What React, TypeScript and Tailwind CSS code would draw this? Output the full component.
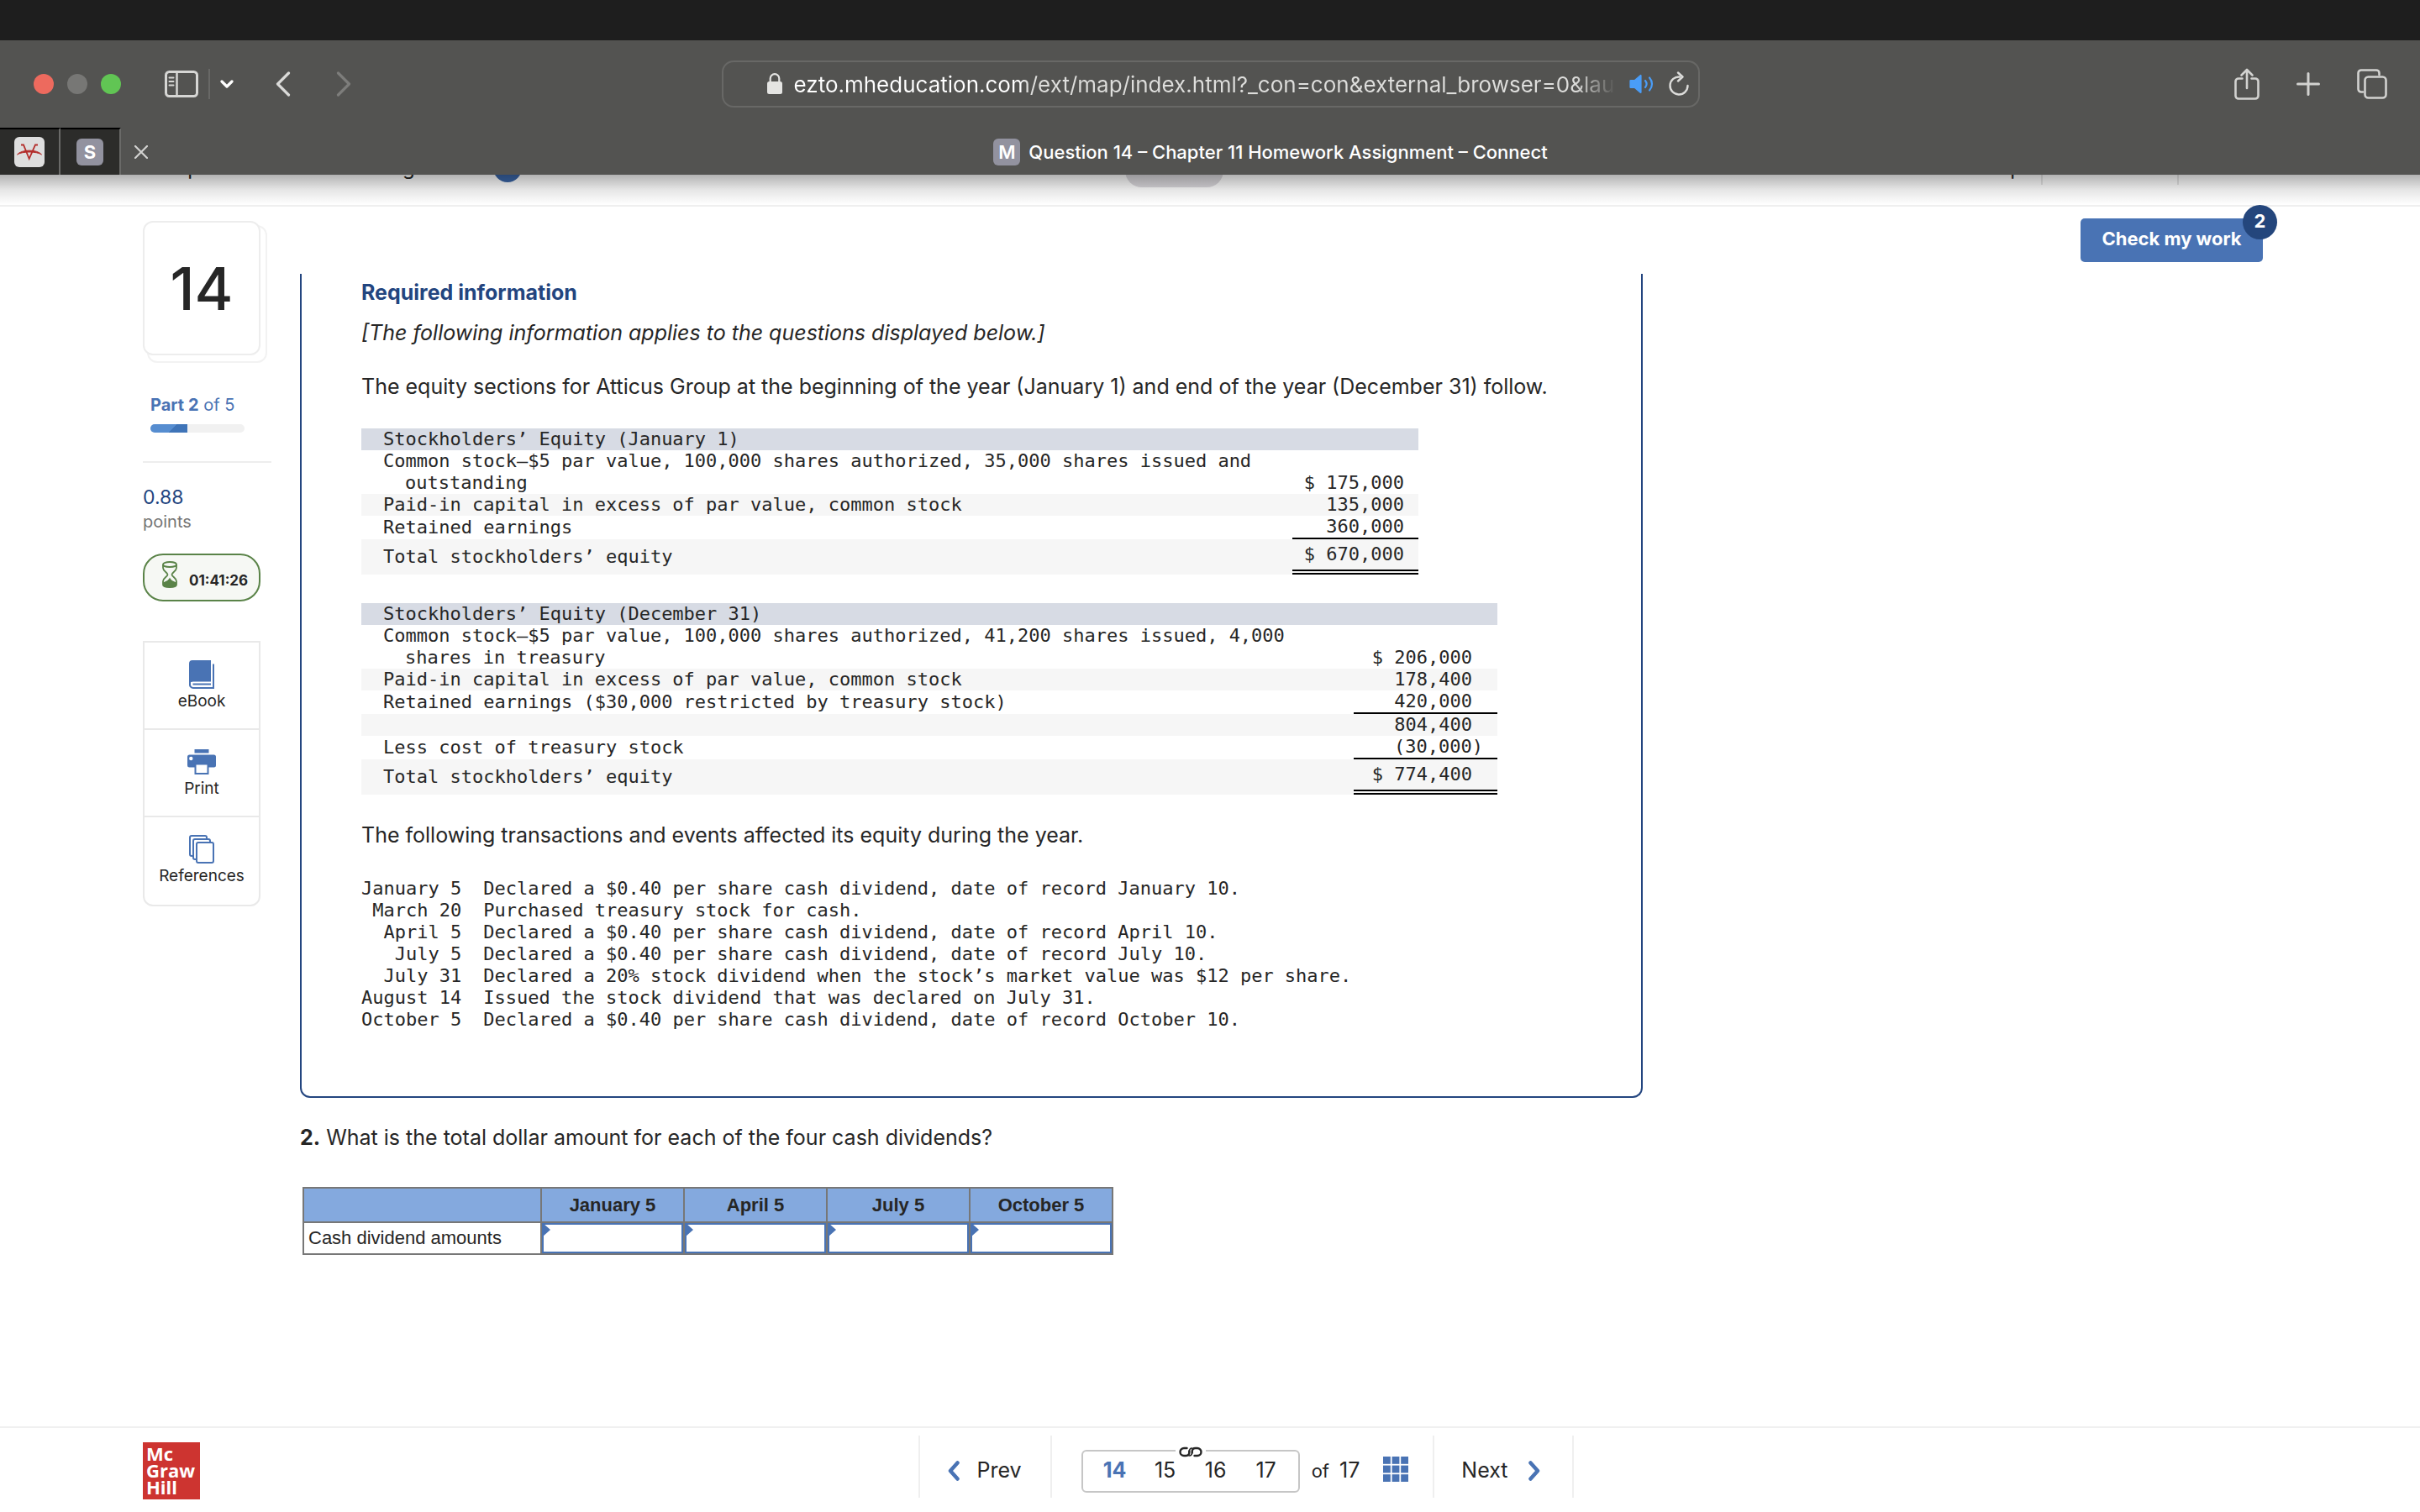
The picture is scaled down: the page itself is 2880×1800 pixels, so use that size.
import React, { useState } from 'react';
import { clsx } from 'clsx';

// --- Types & data ---
interface EquityRow {
    label: string;
    amount: string;
    rule?: boolean;
    total?: boolean;
}

const januaryRows: EquityRow[] = [
    { label: 'Common stock–$5 par value, 100,000 shares authorized, 35,000 shares issued and outstanding', amount: '$ 175,000' },
    { label: 'Paid-in capital in excess of par value, common stock', amount: '135,000' },
    { label: 'Retained earnings', amount: '360,000', rule: true },
    { label: 'Total stockholders’ equity', amount: '$ 670,000', total: true },
];

const decemberRows: EquityRow[] = [
    { label: 'Common stock–$5 par value, 100,000 shares authorized, 41,200 shares issued, 4,000 shares in treasury', amount: '$ 206,000' },
    { label: 'Paid-in capital in excess of par value, common stock', amount: '178,400' },
    { label: 'Retained earnings ($30,000 restricted by treasury stock)', amount: '420,000', rule: true },
    { label: '', amount: '804,400' },
    { label: 'Less cost of treasury stock', amount: '(30,000)', rule: true },
    { label: 'Total stockholders’ equity', amount: '$ 774,400', total: true },
];

const transactions = [
    ['January 5', 'Declared a $0.40 per share cash dividend, date of record January 10.'],
    ['March 20', 'Purchased treasury stock for cash.'],
    ['April 5', 'Declared a $0.40 per share cash dividend, date of record April 10.'],
    ['July 5', 'Declared a $0.40 per share cash dividend, date of record July 10.'],
    ['July 31', 'Declared a 20% stock dividend when the stock’s market value was $12 per share.'],
    ['August 14', 'Issued the stock dividend that was declared on July 31.'],
    ['October 5', 'Declared a $0.40 per share cash dividend, date of record October 10.'],
];

const dividendDates = ['January 5', 'April 5', 'July 5', 'October 5'];

// --- Icons ---
const SidebarIcon = () => (
    <svg width="40" height="32" viewBox="0 0 40 32" fill="none" stroke="#d6d6d4" strokeWidth="3">
        <rect x="1.5" y="1.5" width="37" height="29" rx="4" />
        <path d="M14.5 2v28" strokeWidth="2.5" />
        <path d="M5.5 8.5h5M5.5 13h5M5.5 17.5h5" strokeWidth="2" strokeLinecap="round" />
    </svg>
);

const LockIcon = () => (
    <svg width="18" height="26" viewBox="0 0 18 26">
        <rect x="0" y="10" width="18" height="15" rx="2.5" fill="#e4e4e2" />
        <path d="M3.7 11V6.5a5.3 5.3 0 0 1 10.6 0V11" fill="none" stroke="#e4e4e2" strokeWidth="2.2" />
    </svg>
);

const SpeakerIcon = () => (
    <svg width="30" height="24" viewBox="0 0 30 24" fill="none" stroke="#4a9df8" strokeWidth="2.2" strokeLinecap="round">
        <path d="M1.5 8h5l7-6v20l-7-6h-5z" fill="#4a9df8" strokeLinejoin="round" />
        <path d="M19 8c2 2.5 2 5.5 0 8M24 4.5c4 4.5 4 10.5 0 15" />
    </svg>
);

const ReloadIcon = () => (
    <svg width="26" height="30" viewBox="0 0 26 30" fill="none" stroke="#dcdcda" strokeWidth="2.4" strokeLinecap="round" strokeLinejoin="round">
        <path d="M14 6.5a10.5 10.5 0 1 0 9.5 10.5" />
        <path d="M12 1.5l5.5 5-5.5 5" />
    </svg>
);

const ShareIcon = () => (
    <svg width="30" height="38" viewBox="0 0 30 38" fill="none" stroke="#d2d2d0" strokeWidth="2.6" strokeLinecap="round" strokeLinejoin="round">
        <path d="M9.5 12.5H5A3.5 3.5 0 0 0 1.5 16v17A3.5 3.5 0 0 0 5 36.5h20a3.5 3.5 0 0 0 3.5-3.5V16a3.5 3.5 0 0 0-3.5-3.5h-4.5" />
        <path d="M15 24V2.5M8.5 8.5L15 2l6.5 6.5" />
    </svg>
);

const PlusIcon = () => (
    <svg width="28" height="28" viewBox="0 0 28 28" stroke="#d2d2d0" strokeWidth="3" strokeLinecap="round">
        <path d="M14 1.5v25M1.5 14h25" />
    </svg>
);

const TabsIcon = () => (
    <svg width="36" height="36" viewBox="0 0 36 36" fill="none" stroke="#d2d2d0" strokeWidth="2.6" strokeLinecap="round">
        <rect x="9.5" y="9.5" width="25" height="25" rx="4" />
        <path d="M7 27.5H5a3.5 3.5 0 0 1-3.5-3.5V5A3.5 3.5 0 0 1 5 1.5h18A3.5 3.5 0 0 1 26.5 5v2" />
    </svg>
);

const BullIcon = () => (
    <svg width="36" height="36" viewBox="0 0 36 36" fill="none">
        <rect width="36" height="36" rx="6" fill="#dedede" />
        <path d="M3.5 21c5-6.5 24-6.5 29 0-6-4-23-4-29 0z" fill="#b32d2b" stroke="#b32d2b" />
        <path d="M8 9.5h3l6.7 16.5L25 9.5h3" stroke="#b32d2b" strokeWidth="1.8" />
    </svg>
);

const HourglassIcon = () => (
    <svg width="18" height="32" viewBox="0 0 18 32" fill="none" stroke="#5a8348" strokeWidth="1.8">
        <ellipse cx="9" cy="4" rx="8" ry="3" />
        <path d="M1 4v4c0 4 5.5 5.5 5.5 8S1 20 1 24v4c0 4 16 4 16 0v-4c0-4-5.5-5.5-5.5-8S17 12 17 8V4" />
        <path d="M2 26c3-1 5.5-1.5 7-4.5 1.5 3 4 3.5 7 4.5v2.5c-2 2.5-12 2.5-14 0z" fill="#5a8348" />
    </svg>
);

const BookIcon = () => (
    <svg width="30" height="34" viewBox="0 0 30 34" fill="none">
        <path d="M4 0h22v25.5H5c-2 0-3.5.8-5 2.5V4a4 4 0 0 1 4-4z" fill="#4973b4" />
        <path d="M29 4.5V33H5a4 4 0 0 1-4-4.5V26" stroke="#4973b4" strokeWidth="2" />
        <path d="M26 28.5H4.5" stroke="#4973b4" strokeWidth="2" />
    </svg>
);

const PrinterIcon = () => (
    <svg width="34" height="30" viewBox="0 0 34 30" fill="none">
        <path d="M8.5 0h17v4.5h-17z" fill="#4973b4" />
        <rect y="6.5" width="34" height="15" rx="2.5" fill="#4973b4" />
        <circle cx="4.3" cy="11" r="2.2" fill="#fff" />
        <path d="M9.5 17.5h15V29h-15z" fill="#fff" stroke="#4973b4" strokeWidth="2" />
    </svg>
);

const ReferencesIcon = () => (
    <svg width="30" height="34" viewBox="0 0 30 34" fill="#fff" stroke="#4973b4" strokeWidth="2">
        <rect x="1" y="1" width="20" height="24" rx="2" />
        <rect x="5" y="5" width="20" height="24" rx="2" />
        <rect x="9" y="9" width="20" height="24" rx="2" />
    </svg>
);

const LinkIcon = () => (
    <svg width="28" height="13" viewBox="0 0 28 13" fill="none" stroke="#262626" strokeWidth="2.4" strokeLinecap="round">
        <path d="M9.5 2H6a4.500 4.500 0 0 0 0 9h2.500c2.500 0 3.800-1.500 3.800-4V5.500" />
        <path d="M18.500 11H22a4.500 4.500 0 0 0 0-9h-2.500c-2.500 0-3.800 1.500-3.800 4v1.500" />
        <path d="M12.300 6.500c0-3 1-4.500 3.500-4.500M15.700 6.500c0 3-1 4.500-3.500 4.500" strokeWidth="1.600" />
    </svg>
);

const GridIcon = () => (
    <svg width="30" height="30" viewBox="0 0 30 30" fill="#4973b4">
        {[0, 10.6, 21.2].map(y => [0, 10.6, 21.2].map(x => <rect key={`${x}-${y}`} x={x} y={y} width="8.8" height="8.8" />))}
    </svg>
);

// --- Browser window ---
const BrowserChrome: React.FC = () => (
    <header className="relative z-10 bg-[#535351]">
        <div className="h-12 bg-[#1e1e1e]" />
        <div className="flex h-[104px] items-center">
            <div className="flex flex-1 items-center pl-10">
                <div className="flex gap-4">
                    <button aria-label="Close window" className="size-6 rounded-full bg-[#ed6a5e]" />
                    <button aria-label="Minimize window" className="size-6 rounded-full bg-[#777775]" />
                    <button aria-label="Zoom window" className="size-6 rounded-full bg-[#61c554]" />
                </div>
                <button aria-label="Show sidebar" className="ml-[52px]"><SidebarIcon /></button>
                <div className="ml-3 h-9 w-0.5 bg-[#686866]" />
                <button aria-label="Tab groups" className="ml-3">
                    <svg width="16" height="11" viewBox="0 0 16 11" fill="none" stroke="#fff" strokeWidth="3.2" strokeLinecap="round" strokeLinejoin="round"><path d="M2 2l6 6 6-6" /></svg>
                </button>
                <button aria-label="Back" className="ml-[50px]">
                    <svg width="18" height="30" viewBox="0 0 18 30" fill="none" stroke="#dadad8" strokeWidth="3.2" strokeLinecap="round" strokeLinejoin="round"><path d="M15.5 2L2.5 15l13 13" /></svg>
                </button>
                <button aria-label="Forward" className="ml-[54px]">
                    <svg width="18" height="30" viewBox="0 0 18 30" fill="none" stroke="#7d7d7b" strokeWidth="3.2" strokeLinecap="round" strokeLinejoin="round"><path d="M2.5 2l13 13-13 13" /></svg>
                </button>
            </div>
            <div className="flex h-14 w-[42%] max-w-[1164px] items-center rounded-[14px] border-2 border-[#686866] pr-2.5 pl-[52px]">
                <LockIcon />
                <input
                    aria-label="Address"
                    readOnly
                    value="ezto.mheducation.com/ext/map/index.html?_con=con&external_browser=0&launchUrl"
                    className="ml-3.5 w-0 flex-1 bg-[linear-gradient(90deg,#fff_274px,#dededc_274px,#dededc_95%,transparent)] bg-clip-text text-[26px] text-transparent outline-none"
                />
                <button aria-label="Mute tab" className="ml-4"><SpeakerIcon /></button>
                <button aria-label="Reload" className="ml-4"><ReloadIcon /></button>
            </div>
            <div className="flex flex-1 items-center justify-end gap-11 pr-[39px]">
                <button aria-label="Share"><ShareIcon /></button>
                <button aria-label="New tab"><PlusIcon /></button>
                <button aria-label="Tab overview"><TabsIcon /></button>
            </div>
        </div>
        <div className="flex h-14">
            <button aria-label="Pinned tab" className="flex w-[72px] items-center justify-center border-t-2 border-r-2 border-t-black border-r-[#6a6a68] bg-[#2c2c2a]">
                <BullIcon />
            </button>
            <button className="flex w-[72px] items-center justify-center border-t-2 border-r-2 border-t-black border-r-[#6a6a68] bg-[#2c2c2a]">
                <span className="flex size-8 items-center justify-center rounded-md bg-[#92929f] text-[22px] font-bold text-white">S</span>
            </button>
            <div className="grid flex-1 grid-cols-[1fr_auto_1fr] items-center pt-0.5">
                <button aria-label="Close tab" className="ml-4 justify-self-start">
                    <svg width="16" height="16" viewBox="0 0 16 16" stroke="#d2d2d0" strokeWidth="2.2" strokeLinecap="round"><path d="M1 1l14 14M15 1L1 15" /></svg>
                </button>
                <div className="flex items-center gap-2.5 text-[22px] font-medium text-white">
                    <span className="flex size-8 items-center justify-center rounded-md bg-[#92929f] font-semibold">M</span>
                    Question 14 – Chapter 11 Homework Assignment – Connect
                </div>
            </div>
        </div>
        <div className="absolute inset-x-0 top-full h-9 bg-linear-to-b from-black/30 via-black/10 to-transparent" />
    </header>
);

// --- Assignment bar, scrolled partly under the browser toolbar ---
const AssignmentBar: React.FC = () => (
    <div className="-mt-16 grid h-[102px] grid-cols-[1161fr_117px_1237fr] items-center border-b-2 border-[#efefef] pt-3 pr-[187px] pl-[178px] text-[24px]">
        <div className="flex items-center gap-[22px]">
            <span>Chapter 11 Homework Assignment</span>
            <span className="flex size-[34px] items-center justify-center rounded-full bg-[#3a66a8] font-serif text-[22px] font-bold text-white">i</span>
        </div>
        <div className="h-[46px] rounded-[20px] bg-[#dcdade]" />
        <div className="flex items-center justify-end">
            <span className="pr-[22px]">Help</span>
            <span className="flex h-10 items-center border-l-2 border-[#e6e6e6] px-5 text-[23px] text-gray-500">Save &amp; Exit</span>
            <span className="flex h-10 items-center border-l-2 border-[#e6e6e6] pl-6 text-[23px] text-gray-500">Submit</span>
        </div>
    </div>
);

// --- Left rail ---
const tools = [
    { name: 'eBook', icon: <BookIcon /> },
    { name: 'Print', icon: <PrinterIcon /> },
    { name: 'References', icon: <ReferencesIcon /> },
];

const QuestionRail: React.FC = () => (
    <aside className="w-[153px] shrink-0 pt-[17px]">
        <div className="relative w-[140px]">
            <div className="absolute top-[5px] left-[5px] h-[164px] w-[143px] rounded-xl border-2 border-[#f2f2f2]" />
            <div className="relative flex h-40 items-center justify-center rounded-xl border-2 border-[#ededed] bg-white text-[70px] font-medium">14</div>
        </div>
        <p className="mt-[45px] pl-[9px] text-[20px] leading-7 text-[#4973b4]"><b>Part 2</b> of 5</p>
        <div className="mt-[9px] ml-[9px] h-2.5 w-28 overflow-hidden rounded-full bg-[#f1f1f1]">
            <div className="h-full w-11 bg-[linear-gradient(135deg,#568dd0_58%,#3f74b8_58%)]" />
        </div>
        <hr className="mt-[34px] border-t-2 border-[#ededed]" />
        <p className="mt-[27px] text-[23px] leading-7 text-[#23457f]">0.88</p>
        <p className="text-[20px] leading-[30px] text-[#757575]">points</p>
        <div className="mt-[23px] flex h-[57px] w-[140px] items-center rounded-3xl border-2 border-[#5a8348] bg-[#f6f8f4] pl-[21px]">
            <span className="-mt-2"><HourglassIcon /></span>
            <span className="mt-2 ml-3.5 text-[17px] font-bold">01:41:26</span>
        </div>
        <div className="mt-[47px] w-[140px] divide-y-2 divide-[#e9e9e9] rounded-b-xl border-2 border-[#e9e9e9]">
            {tools.map(tool => (
                <button key={tool.name} className="flex h-[104px] w-full flex-col items-center pt-[21px] text-[19px] leading-[30px]">
                    <span className="flex h-[34px] items-center">{tool.icon}</span>
                    {tool.name}
                </button>
            ))}
        </div>
    </aside>
);

// --- Equity statement ---
interface EquityTableProps {
    title: string;
    rows: EquityRow[];
    className: string;
    amountClass: string;
}
const EquityTable: React.FC<EquityTableProps> = ({ title, rows, className, amountClass }) => (
    <table className={clsx('table-fixed border-separate border-spacing-0 font-[DejaVu_Sans_Mono,monospace] text-[22px] leading-[26px]', className)}>
        <colgroup>
            <col />
            <col className={amountClass} />
        </colgroup>
        <thead>
            <tr>
                <th colSpan={2} className="bg-[#d7dbe4] pl-[26px] text-left font-normal">{title}</th>
            </tr>
        </thead>
        <tbody>
            {rows.map((row, i) => (
                <tr key={i} className={clsx(i % 2 === 1 && 'bg-[#f6f6f6]', row.total && 'h-[42px]')}>
                    <td className="pl-[52px] -indent-[26px]">{row.label}</td>
                    <td
                        className={clsx(
                            'text-right',
                            row.amount.endsWith(')') || amountClass === 'w-[150px]' ? 'pr-[17px]' : 'pr-[30px]',
                            row.total ? 'border-b-6 border-double border-black' : 'align-bottom',
                            row.rule && 'border-b-2 border-black',
                        )}
                    >
                        {row.amount}
                    </td>
                </tr>
            ))}
        </tbody>
    </table>
);

// --- Answer grid ---
const AnswerTable: React.FC = () => {
    const [answers, setAnswers] = useState<Record<string, string>>({});

    return (
        <table className="mt-[43px] ml-[3px] w-[965px] table-fixed border-collapse font-[Liberation_Sans,sans-serif] text-[22px]">
            <thead>
                <tr className="h-[41px] bg-[#84a9de]">
                    <th className="w-[283px] border-2 border-[#777]" />
                    {dividendDates.map(date => <th key={date} className="border-2 border-[#777] font-bold">{date}</th>)}
                </tr>
            </thead>
            <tbody>
                <tr>
                    <th className="border-2 border-[#777] pl-[5px] text-left font-normal">Cash dividend amounts</th>
                    {dividendDates.map(date => (
                        <td key={date} className="relative border-2 border-[#777] p-0">
                            <input
                                aria-label={`Cash dividend amount, ${date}`}
                                value={answers[date] ?? ''}
                                onChange={e => setAnswers({ ...answers, [date]: e.target.value })}
                                className="block h-9 w-full border-2 border-[#4973b4] px-3 text-right outline-none"
                            />
                            <svg width="10" height="16" viewBox="0 0 10 16" className="absolute top-0 left-0"><path d="M0 0h1l9 8-9 8H0z" fill="#4973b4" /></svg>
                        </td>
                    ))}
                </tr>
            </tbody>
        </table>
    );
};

// --- Footer ---
const FooterNav: React.FC = () => (
    <footer className="flex items-start border-t-2 border-[#f0f0f0] pt-[9px] pr-[152px] pb-[15px] pl-[170px]">
        <a href="#" className="mt-2 flex size-[68px] flex-col justify-center bg-[#cd3430] pb-0.5 pl-1 font-[Open_Sans,sans-serif] text-[22px] leading-5 font-bold text-white">
            <span>Mc</span>
            <span>Graw</span>
            <span>Hill</span>
        </a>
        <nav className="mx-auto flex h-[74px] divide-x-2 divide-[#efefef] border-x-2 border-[#efefef] text-[25px]">
            <button className="flex items-center gap-5 pt-2.5 pr-[34px] pl-8">
                <svg width="16" height="24" viewBox="0 0 16 24" fill="none" stroke="#4973b4" strokeWidth="4.5" strokeLinecap="round" strokeLinejoin="round"><path d="M12.5 2.5L4 12l8.5 9.5" /></svg>
                Prev
            </button>
            <div className="flex items-center pt-2.5 pr-[29px] pl-[35px]">
                <div className="relative flex h-[51px] items-center rounded-md border-2 border-[#c6c6c6] px-2">
                    <button className="w-[60px] font-bold text-[#4973b4]">14</button>
                    <button className="w-[60px]">15</button>
                    <button className="w-[60px]">16</button>
                    <button className="w-[60px]">17</button>
                    <span className="absolute -top-1.5 left-1/2 -translate-x-1/2 bg-white px-1"><LinkIcon /></span>
                </div>
                <span className="ml-3.5 text-[22px]">of</span>
                <span className="ml-3">17</span>
                <button aria-label="Question list" className="ml-7 pb-1"><GridIcon /></button>
            </div>
            <button className="flex items-center gap-6 pt-2.5 pr-[37px] pl-8">
                Next
                <svg width="16" height="24" viewBox="0 0 16 24" fill="none" stroke="#4973b4" strokeWidth="4.5" strokeLinecap="round" strokeLinejoin="round"><path d="M3.5 2.5L12 12l-8.5 9.5" /></svg>
            </button>
        </nav>
    </footer>
);

// --- Main Component ---
const App: React.FC = () => (
    <div className="flex min-h-screen flex-col bg-white font-[Inter,sans-serif] text-[#262626]">
        <BrowserChrome />
        <AssignmentBar />
        <div className="flex flex-1 items-start pr-[187px] pl-[170px]">
            <QuestionRail />
            <main className="mt-20 ml-[34px] max-w-[1598px] flex-1 text-[25px] leading-8">
                <section className="rounded-b-xl border-2 border-t-0 border-[#23457f] pt-1.5 pr-16 pb-[78px] pl-[71px]">
                    <h1 className="font-bold text-[#23457f]">Required information</h1>
                    <p className="mt-4 italic">[The following information applies to the questions displayed below.]</p>
                    <p className="mt-8">The equity sections for Atticus Group at the beginning of the year (January 1) and end of the year (December 31) follow.</p>
                    <EquityTable title="Stockholders’ Equity (January 1)" rows={januaryRows} className="mt-[34px] w-[1258px]" amountClass="w-[150px]" />
                    <EquityTable title="Stockholders’ Equity (December 31)" rows={decemberRows} className="mt-[34px] w-[1352px]" amountClass="w-[171px]" />
                    <p className="mt-8">The following transactions and events affected its equity during the year.</p>
                    <table className="mt-[35px] font-[DejaVu_Sans_Mono,monospace] text-[22px] leading-[26px]">
                        <tbody>
                            {transactions.map(([date, text]) => (
                                <tr key={date}>
                                    <td className="pr-[26px] text-right whitespace-nowrap">{date}</td>
                                    <td>{text}</td>
                                </tr>
                            ))}
                        </tbody>
                    </table>
                </section>
                <p className="mt-[31px]"><b>2.</b> What is the total dollar amount for each of the four cash dividends?</p>
                <AnswerTable />
            </main>
            <button className="relative mt-3.5 ml-auto h-[52px] w-[217px] rounded-[5px] bg-[#4973b4] pb-1 text-[22px] font-bold text-white">
                Check my work
                <span className="absolute -top-4 -right-[17px] flex size-[41px] items-center justify-center rounded-full bg-[#24467c] pb-0.5">2</span>
            </button>
        </div>
        <FooterNav />
    </div>
);

export default App;
